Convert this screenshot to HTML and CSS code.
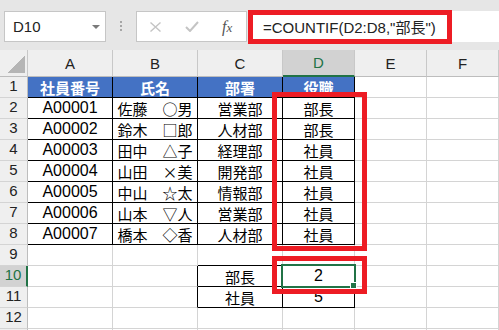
FILE: index.html
```html
<!DOCTYPE html>
<html lang="ja">
<head>
    <meta charset="UTF-8">
    <title>COUNTIF</title>
    <link rel="stylesheet" href="styles.css">
</head>
<body>

    <div class="toolbar">
        <div class="namebox"><span>D10</span><span class="arrow"></span></div>
        <div class="grip"></div>
        <div class="fxbtns">
            <svg class="btn" width="11" height="10" viewBox="0 0 11 10"><path d="M0.5 0.5 L10.5 9.5 M10.5 0.5 L0.5 9.5" stroke="#c4c4c4" stroke-width="1.4" fill="none"/></svg>
            <svg class="btn" width="14" height="11" viewBox="0 0 14 11"><path d="M1 6 L5 10 L13 1" stroke="#c4c4c4" stroke-width="2" fill="none"/></svg>
            <span class="fx"><i>f</i><i class="x">x</i></span>
        </div>
        <div class="formula">=COUNTIF(D2:D8,"部長")</div>
        <div class="mark mark-formula"></div>
    </div>

    <div class="sheet">
        <!-- 列見出し -->
        <div class="ch corner"><span class="tri"></span></div>
        <div class="ch">A</div>
        <div class="ch">B</div>
        <div class="ch">C</div>
        <div class="ch sel-c">D</div>
        <div class="ch">E</div>
        <div class="ch">F</div>

        <div class="rh">1</div>
        <div class="c bx hd">社員番号</div>
        <div class="c bx hd">氏名</div>
        <div class="c bx hd">部署</div>
        <div class="c bx hd">役職</div>
        <div class="c"></div>
        <div class="c"></div>

        <div class="rh">2</div>
        <div class="c bx id">A00001</div>
        <div class="c bx jp">佐藤　○男</div>
        <div class="c bx">営業部</div>
        <div class="c bx">部長</div>
        <div class="c"></div>
        <div class="c"></div>

        <div class="rh">3</div>
        <div class="c bx id">A00002</div>
        <div class="c bx jp">鈴木　□郎</div>
        <div class="c bx">人材部</div>
        <div class="c bx">部長</div>
        <div class="c"></div>
        <div class="c"></div>

        <div class="rh">4</div>
        <div class="c bx id">A00003</div>
        <div class="c bx jp">田中　△子</div>
        <div class="c bx">経理部</div>
        <div class="c bx">社員</div>
        <div class="c"></div>
        <div class="c"></div>

        <div class="rh">5</div>
        <div class="c bx id">A00004</div>
        <div class="c bx jp">山田　×美</div>
        <div class="c bx">開発部</div>
        <div class="c bx">社員</div>
        <div class="c"></div>
        <div class="c"></div>

        <div class="rh">6</div>
        <div class="c bx id">A00005</div>
        <div class="c bx jp">中山　☆太</div>
        <div class="c bx">情報部</div>
        <div class="c bx">社員</div>
        <div class="c"></div>
        <div class="c"></div>

        <div class="rh">7</div>
        <div class="c bx id">A00006</div>
        <div class="c bx jp">山本　▽人</div>
        <div class="c bx">営業部</div>
        <div class="c bx">社員</div>
        <div class="c"></div>
        <div class="c"></div>

        <div class="rh">8</div>
        <div class="c bx id">A00007</div>
        <div class="c bx jp">橋本　◇香</div>
        <div class="c bx">人材部</div>
        <div class="c bx">社員</div>
        <div class="c"></div>
        <div class="c"></div>

        <div class="rh">9</div>
        <div class="c"></div>
        <div class="c"></div>
        <div class="c eb"></div>
        <div class="c eb"></div>
        <div class="c"></div>
        <div class="c"></div>

        <div class="rh sel-r">10</div>
        <div class="c"></div>
        <div class="c er"></div>
        <div class="c bx">部長</div>
        <div class="c bx id cur">2</div>
        <div class="c"></div>
        <div class="c"></div>

        <div class="rh">11</div>
        <div class="c"></div>
        <div class="c er"></div>
        <div class="c bx">社員</div>
        <div class="c bx id">5</div>
        <div class="c"></div>
        <div class="c"></div>

        <div class="rh">12</div>
        <div class="c"></div>
        <div class="c"></div>
        <div class="c"></div>
        <div class="c"></div>
        <div class="c"></div>
        <div class="c"></div>

        <!-- 13行目は上端の線だけが見える -->
        <div class="rh"></div>
        <div class="c"></div>
        <div class="c"></div>
        <div class="c"></div>
        <div class="c"></div>
        <div class="c"></div>
        <div class="c"></div>

        <!-- 赤枠 -->
        <div class="mark mark-range"></div>
        <div class="mark mark-cell"></div>
    </div>

</body>
</html>
```

FILE: styles.css
```css
body {
    margin: 0;
    width: 499px;
    height: 330px;
    overflow: hidden;
    background-color: #fff;
    font-family: "Liberation Sans", "Noto Sans CJK JP", sans-serif;
    color: #000;
}

/* 数式バー */
.toolbar {
    position: relative;
    height: 50px;
    box-sizing: border-box;
    padding-top: 11px;
    background-color: #e6e6e6;
    display: flex;
    align-items: flex-start;
}
.namebox {
    margin-left: 4px;
    width: 102px;
    height: 31px;
    box-sizing: border-box;
    background-color: #fff;
    border: 1px solid #c6c6c6;
    display: flex;
    align-items: center;
    padding-left: 8px;
    font-size: 15px;
    color: #222;
}
.namebox .arrow {
    margin-left: auto;
    margin-right: 5px;
    width: 0;
    height: 0;
    border-left: 4px solid transparent;
    border-right: 4px solid transparent;
    border-top: 4px solid #7a7a7a;
}
.grip {
    margin-left: 14px;
    margin-top: 10px;
    width: 2px;
    height: 10px;
    background: repeating-linear-gradient(#a6a6a6 0 2px, transparent 2px 4px);
}
.fxbtns {
    margin-left: 14px;
    width: 111px;
    height: 31px;
    box-sizing: border-box;
    background-color: #fff;
    border: 1px solid #c6c6c6;
    display: flex;
    align-items: center;
    padding-left: 13px;
    gap: 24px;
}
.fx {
    margin-left: -1px;
    font-family: "Liberation Serif", serif;
    font-size: 16px;
    color: #555;
}
.fx .x {
    font-size: 13px;
}
.formula {
    margin-left: 1px;
    flex: 1;
    height: 31px;
    box-sizing: border-box;
    background-color: #fff;
    padding-left: 15px;
    display: flex;
    align-items: center;
    font-size: 15px;
    color: #222;
}

/* シート */
.sheet {
    position: relative;
    display: grid;
    grid-template-columns: 28px 85px 85px 85px 72px 72px 1fr;
    grid-template-rows: 27px repeat(13, 21px);
}
.sheet > div {
    box-sizing: border-box;
    border-right: 1px solid #d4d4d4;
    border-bottom: 1px solid #d4d4d4;
    display: flex;
    align-items: center;
    justify-content: center;
    white-space: nowrap;
}
.ch {
    background-color: #efefef;
    font-size: 15px;
    color: #222;
    border-right-color: #c8c8c8 !important;
    border-bottom-color: #bdbdbd !important;
}
.corner {
    justify-content: flex-end !important;
    align-items: flex-end !important;
    padding: 0 2px 3px 0;
}
.tri {
    width: 17px;
    height: 17px;
    background: linear-gradient(to bottom right, transparent 50%, #b5b5b5 50%);
}
.rh {
    background-color: #efefef;
    font-size: 15px;
    color: #222;
    padding-bottom: 4px;
    border-right-color: #bdbdbd !important;
}
.sel-c {
    background-color: #d2d2d2;
    color: #217346;
    border-bottom: 2px solid #217346 !important;
}
.sel-r {
    background-color: #d2d2d2;
    color: #217346;
    border-right: 2px solid #217346 !important;
}
.c {
    font-size: 15px;
}
.jp {
    font-family: "Noto Sans CJK JP", sans-serif;
}
.id {
    font-size: 16px;
}
.hd {
    background-color: #4472c4;
    color: #fff;
    font-weight: bold;
}
.bx {
    border-right-color: #000 !important;
    border-bottom-color: #000 !important;
}
.eb {
    border-bottom-color: #000 !important;
}
.er {
    border-right-color: #000 !important;
}

/* 選択セル */
.cur {
    position: relative;
}
.cur::before {
    content: "";
    position: absolute;
    inset: -2px;
    border: 2px solid #217346;
}
.cur::after {
    content: "";
    position: absolute;
    right: -3px;
    bottom: -3px;
    width: 5px;
    height: 5px;
    background-color: #217346;
    border: 1px solid #fff;
}

/* 赤枠 */
.mark {
    position: absolute;
    box-sizing: border-box;
    border: 5px solid #ed1c24 !important;
}
.mark-formula {
    left: 248px;
    top: 10px;
    width: 204px;
    height: 34px;
}
.mark-range {
    left: 272px;
    top: 42px;
    width: 95px;
    height: 159px;
}
.mark-cell {
    left: 272px;
    top: 206px;
    width: 95px;
    height: 38px;
}
```
